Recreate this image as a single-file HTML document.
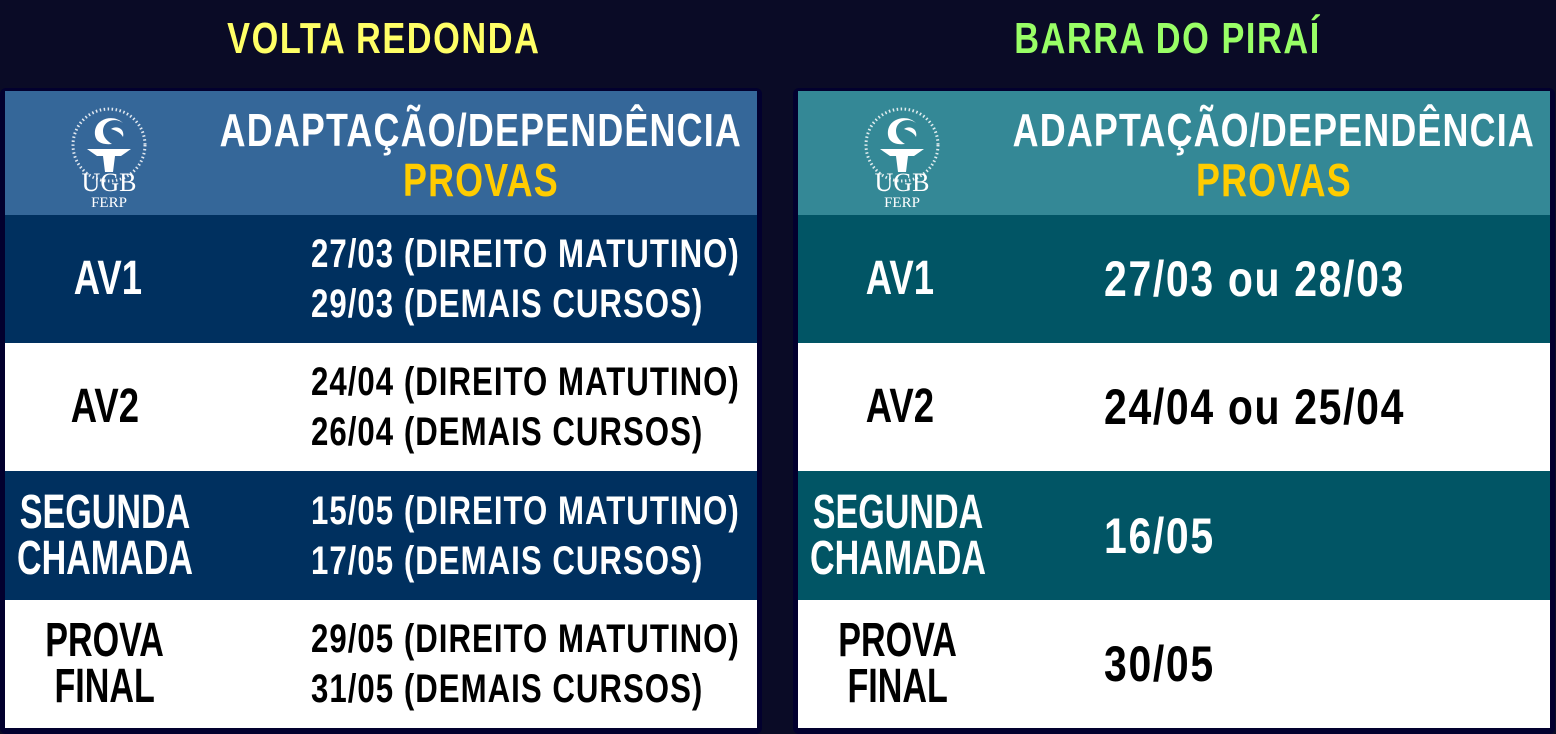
<!DOCTYPE html>
<html><head><meta charset="utf-8"><style>
*{margin:0;padding:0;box-sizing:border-box}
body{width:1556px;height:734px;background:#0a0b26;position:relative;overflow:hidden;font-family:"Liberation Sans",sans-serif;font-weight:bold}
.t{position:absolute;white-space:nowrap}
.s{display:inline-block;transform:scaleX(.78);white-space:nowrap}
.title{top:14px;font-size:44px;letter-spacing:2px;width:600px;text-align:center}
.box{position:absolute;top:88px;width:762px;height:646px;background:#02002e;border-radius:6px}
.r{position:absolute;width:752px;overflow:hidden}
.lab{position:absolute;top:0;text-align:center;font-size:48px;line-height:46px;display:flex;flex-direction:column;align-items:center;justify-content:center;height:100%}
.lab .s{transform:scaleX(.76)}
.lab.two .s{transform:scaleX(.71)}
.d{position:absolute;top:0;font-size:40px;line-height:50px;letter-spacing:1.3px;display:flex;flex-direction:column;justify-content:center;height:100%}
.d .s{transform:scaleX(.78);transform-origin:left center}
.d.big{font-size:50px;letter-spacing:2px}
.d.big .s{transform:scaleX(.82)}
.hd{position:absolute;text-align:center;font-size:46px;line-height:50px;letter-spacing:1.5px;color:#fff;top:14px;display:flex;flex-direction:column;align-items:center}
.logo{position:absolute;left:56px;top:8px}
</style></head><body>
<div class="t title" style="left:84px;color:#ffff66"><span class="s">VOLTA REDONDA</span></div>
<div class="t title" style="left:868px;color:#99ff66"><span class="s">BARRA DO PIRAÍ</span></div>

<div class="box" style="left:0"></div>
<div class="box" style="left:793px"></div>

<!-- left -->
<div class="r" style="left:5px;top:91px;height:124px;background:#356799">
 <svg class="logo" width="96" height="112" viewBox="0 0 96 112"><circle cx="48" cy="46" r="36" fill="none" stroke="#fff" stroke-width="3" stroke-dasharray="1.5 2.5" opacity=".85"/><path d="M34 36c-2-16 18-22 28-12-8-6-20-2-20 8 0 6 4 10 9 13-10 1-16-2-17-9z" fill="#fff"/><path d="M50 30c6-4 14 0 12 8-2-4-6-6-12-8z" fill="#fff"/><path d="M26 50h44l-10 7H36z" fill="#fff"/><path d="M42 57h12l-2 16h-8z" fill="#fff"/><text x="48" y="92" text-anchor="middle" font-family="Liberation Serif,serif" font-size="26" fill="#fff" font-weight="normal">UGB</text><text x="48" y="108" text-anchor="middle" font-family="Liberation Serif,serif" font-size="15" fill="#fff" font-weight="normal">FERP</text></svg>
 <div class="hd" style="left:206px;width:540px"><span class="s">ADAPTAÇÃO/DEPENDÊNCIA</span><span class="s" style="color:#ffcc00">PROVAS</span></div>
</div>
<div class="r" style="left:5px;top:215px;height:128px;background:#00305f;color:#fff">
 <div class="lab" style="left:0;width:205px"><span class="s">AV1</span></div>
 <div class="d" style="left:306px"><span class="s">27/03 (DIREITO MATUTINO)</span><span class="s">29/03 (DEMAIS CURSOS)</span></div></div>
<div class="r" style="left:5px;top:343px;height:128px;background:#fff;color:#000">
 <div class="lab" style="left:0;width:200px"><span class="s">AV2</span></div>
 <div class="d" style="left:306px"><span class="s">24/04 (DIREITO MATUTINO)</span><span class="s">26/04 (DEMAIS CURSOS)</span></div></div>
<div class="r" style="left:5px;top:471px;height:129px;background:#00305f;color:#fff">
 <div class="lab two" style="left:0;width:200px"><span class="s">SEGUNDA</span><span class="s">CHAMADA</span></div>
 <div class="d" style="left:306px"><span class="s">15/05 (DIREITO MATUTINO)</span><span class="s">17/05 (DEMAIS CURSOS)</span></div></div>
<div class="r" style="left:5px;top:600px;height:128px;background:#fff;color:#000">
 <div class="lab two" style="left:0;width:200px"><span class="s">PROVA</span><span class="s">FINAL</span></div>
 <div class="d" style="left:306px"><span class="s">29/05 (DIREITO MATUTINO)</span><span class="s">31/05 (DEMAIS CURSOS)</span></div></div>

<!-- right -->
<div class="r" style="left:798px;top:91px;height:124px;background:#348896">
 <svg class="logo" width="96" height="112" viewBox="0 0 96 112"><circle cx="48" cy="46" r="36" fill="none" stroke="#fff" stroke-width="3" stroke-dasharray="1.5 2.5" opacity=".85"/><path d="M34 36c-2-16 18-22 28-12-8-6-20-2-20 8 0 6 4 10 9 13-10 1-16-2-17-9z" fill="#fff"/><path d="M50 30c6-4 14 0 12 8-2-4-6-6-12-8z" fill="#fff"/><path d="M26 50h44l-10 7H36z" fill="#fff"/><path d="M42 57h12l-2 16h-8z" fill="#fff"/><text x="48" y="92" text-anchor="middle" font-family="Liberation Serif,serif" font-size="26" fill="#fff" font-weight="normal">UGB</text><text x="48" y="108" text-anchor="middle" font-family="Liberation Serif,serif" font-size="15" fill="#fff" font-weight="normal">FERP</text></svg>
 <div class="hd" style="left:206px;width:540px"><span class="s">ADAPTAÇÃO/DEPENDÊNCIA</span><span class="s" style="color:#ffcc00">PROVAS</span></div>
</div>
<div class="r" style="left:798px;top:215px;height:128px;background:#015565;color:#fff">
 <div class="lab" style="left:0;width:204px"><span class="s">AV1</span></div>
 <div class="d big" style="left:306px"><span class="s">27/03 ou 28/03</span></div></div>
<div class="r" style="left:798px;top:343px;height:128px;background:#fff;color:#000">
 <div class="lab" style="left:0;width:204px"><span class="s">AV2</span></div>
 <div class="d big" style="left:306px"><span class="s">24/04 ou 25/04</span></div></div>
<div class="r" style="left:798px;top:471px;height:129px;background:#015565;color:#fff">
 <div class="lab two" style="left:0;width:200px"><span class="s">SEGUNDA</span><span class="s">CHAMADA</span></div>
 <div class="d big" style="left:306px"><span class="s">16/05</span></div></div>
<div class="r" style="left:798px;top:600px;height:128px;background:#fff;color:#000">
 <div class="lab two" style="left:0;width:200px"><span class="s">PROVA</span><span class="s">FINAL</span></div>
 <div class="d big" style="left:306px"><span class="s">30/05</span></div></div>
</body></html>
